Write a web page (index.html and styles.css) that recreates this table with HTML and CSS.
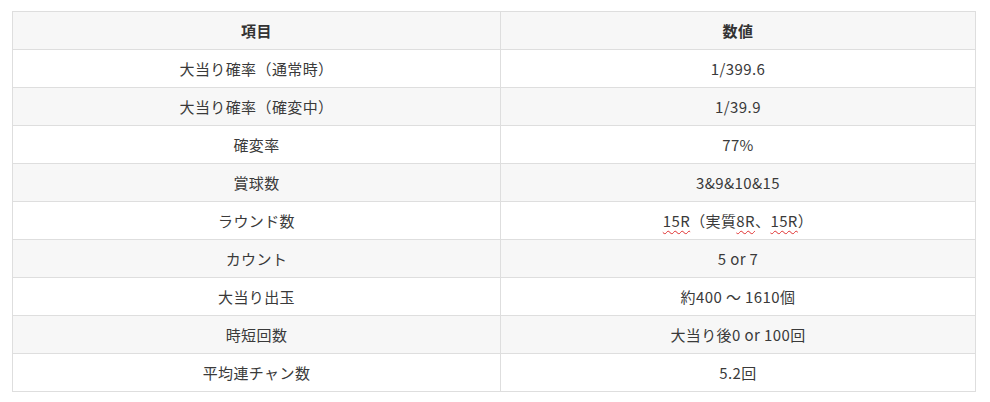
FILE: index.html
```html
<!DOCTYPE html>
<html lang="ja">
<head>
<meta charset="utf-8">
<link rel="stylesheet" href="styles.css">
</head>
<body>
<div class="wrap">
<table class="spec">
<thead>
<tr><th>項目</th><th>数値</th></tr>
</thead>
<tbody>
<tr><td>大当り確率（通常時）</td><td>1/399.6</td></tr>
<tr><td>大当り確率（確変中）</td><td>1/39.9</td></tr>
<tr><td>確変率</td><td>77%</td></tr>
<tr><td>賞球数</td><td>3&amp;9&amp;10&amp;15</td></tr>
<tr><td>ラウンド数</td><td><span class="sp">15R</span>（実質<span class="sp">8R</span>、<span class="sp">15R</span>）</td></tr>
<tr><td>カウント</td><td>5 or 7</td></tr>
<tr><td>大当り出玉</td><td>約400 ～ 1610個</td></tr>
<tr><td>時短回数</td><td>大当り後0 or 100回</td></tr>
<tr><td>平均連チャン数</td><td>5.2回</td></tr>
</tbody>
</table>
</div>
</body>
</html>
```
FILE: styles.css
```css
html, body {
  margin: 0;
  padding: 0;
  background: #fff;
}
.wrap {
  padding: 11px 0 0 12px;
}
.spec {
  width: 964px;
  border-collapse: collapse;
  table-layout: fixed;
  font-family: "Noto Sans CJK JP", "Open Sans", sans-serif;
  font-size: 15px;
  color: #333;
}
.spec th,
.spec td {
  border: 1px solid #dedede;
  height: 38px;
  padding: 0 8px;
  text-align: center;
  vertical-align: middle;
  box-sizing: border-box;
  line-height: 20px;
  letter-spacing: 0.4px;
}
.spec td {
  color: #3a3a3a;
}
.spec th {
  background: #f7f7f7;
  font-weight: bold;
}
.spec th:first-child,
.spec td:first-child {
  width: 488px;
}
.spec tbody tr:nth-child(even) td {
  background: #f7f7f7;
}
.sp {
  text-decoration: underline wavy #e03030;
  text-decoration-thickness: 1px;
  text-underline-offset: 3px;
}
```
